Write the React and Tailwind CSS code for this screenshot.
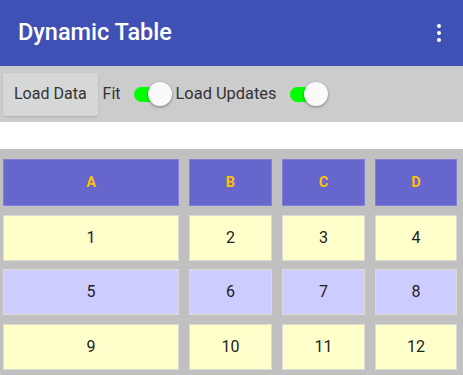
const ROWS = [
  { bg: 'bg-[#ffffcc]', cells: ['1', '2', '3', '4'] },
  { bg: 'bg-[#ccccff]', cells: ['5', '6', '7', '8'] },
  { bg: 'bg-[#ffffcc]', cells: ['9', '10', '11', '12'] },
]

function Toggle() {
  return (
    <div className="relative h-[26px] w-[38px] shrink-0">
      <div className="absolute left-0 top-[6px] h-[15px] w-[32px] rounded-full bg-[#00ff00]" />
      <div className="absolute left-[14px] top-[1px] h-[24px] w-[24px] rounded-full bg-[#fafafa] shadow-[0_1px_3px_rgba(0,0,0,0.4)]" />
    </div>
  )
}

export default function App() {
  return (
    <div className="flex h-[375px] w-[463px] flex-col overflow-hidden bg-white font-['Roboto',sans-serif]">
      {/* App bar */}
      <header className="flex h-[66px] shrink-0 items-center justify-between bg-[#3f51b5] pl-[18px] pr-[22px] shadow-[0_2px_3px_rgba(0,0,0,0.25)]">
        <h1 className="text-[23.5px] font-medium leading-none text-white">Dynamic Table</h1>
        <div className="flex flex-col items-center gap-[2.5px]">
          <span className="h-[4.5px] w-[4.5px] rounded-full bg-white" />
          <span className="h-[4.5px] w-[4.5px] rounded-full bg-white" />
          <span className="h-[4.5px] w-[4.5px] rounded-full bg-white" />
        </div>
      </header>

      {/* Controls */}
      <div className="flex h-[56px] shrink-0 items-center bg-[#cccccc] pl-[3px] text-[16px] text-[#333333]">
        <button className="h-[43px] rounded-[2px] bg-[#d6d7d7] px-[11px] shadow-[0_1px_2px_rgba(0,0,0,0.15)]">
          Load Data
        </button>
        <span className="ml-[5px]">Fit</span>
        <div className="ml-[13px]">
          <Toggle />
        </div>
        <span className="ml-[4px] text-[16.4px]">Load Updates</span>
        <div className="ml-[14px]">
          <Toggle />
        </div>
      </div>

      <div className="h-[27px] shrink-0 bg-white" />

      {/* Table */}
      <div className="flex-1 bg-[#c0c0c0] pl-[3px] pt-[10px]">
        <div className="grid grid-cols-[176px_83px_83px_82px] gap-x-[10px] gap-y-[8.5px]">
          {['A', 'B', 'C', 'D'].map((h) => (
            <div
              key={h}
              className="flex h-[47px] items-center justify-center border border-[#8080d8] bg-[#6666cc] text-[14.5px] font-bold text-[#ffc107]"
            >
              {h}
            </div>
          ))}
          {ROWS.map((row) =>
            row.cells.map((c) => (
              <div
                key={c}
                className={`flex h-[46px] items-center justify-center border border-[#dcdcd0] text-[16px] text-[#222222] ${row.bg}`}
              >
                {c}
              </div>
            ))
          )}
        </div>
      </div>
    </div>
  )
}
